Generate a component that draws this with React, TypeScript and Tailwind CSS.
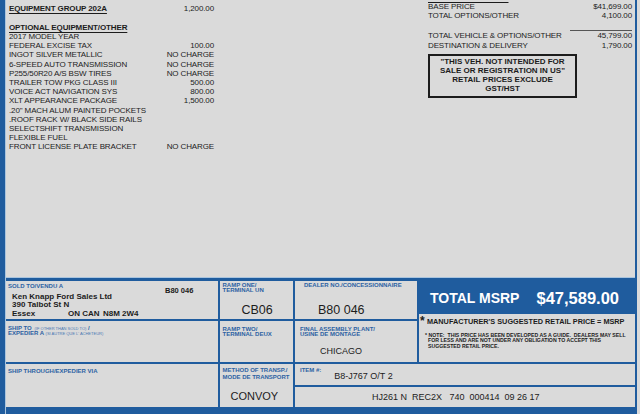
const OPTIONS: [string, string][] = [
  ['2017 MODEL YEAR', ''],
  ['FEDERAL EXCISE TAX', '100.00'],
  ['INGOT SILVER METALLIC', 'NO CHARGE'],
  ['6-SPEED AUTO TRANSMISSION', 'NO CHARGE'],
  ['P255/50R20 A/S BSW TIRES', 'NO CHARGE'],
  ['TRAILER TOW PKG CLASS III', '500.00'],
  ['VOICE ACT NAVIGATION SYS', '800.00'],
  ['XLT APPEARANCE PACKAGE', '1,500.00'],
  ['.20" MACH ALUM PAINTED POCKETS', ''],
  ['.ROOF RACK W/ BLACK SIDE RAILS', ''],
  ['SELECTSHIFT TRANSMISSION', ''],
  ['FLEXIBLE FUEL', ''],
  ['FRONT LICENSE PLATE BRACKET', 'NO CHARGE'],
];

function Label({ children, className = '' }: { children: React.ReactNode; className?: string }) {
  return (
    <div
      className={`font-['Liberation_Sans_Narrow','Liberation_Sans',Arial,sans-serif] font-bold uppercase text-[#2d62a3] text-[6px] leading-[5px] whitespace-nowrap ${className}`}
    >
      {children}
    </div>
  );
}

export default function App() {
  return (
    <div className="w-[640px] h-[414px] overflow-hidden flex bg-[#dadada] text-[#1c1c1c] font-['Liberation_Sans',Arial,sans-serif]">
      <div className="w-[5px] shrink-0 bg-[#1f5c9e]" />
      <div className="w-[1px] shrink-0 bg-[#a9c4de]" />

      <div className="w-[629px] shrink-0 flex flex-col">
        {/* Top: equipment + price information */}
        <div className="h-[278px] shrink-0 border-b border-[#a9c4de] flex pl-[3px] overflow-hidden">
          <div className="w-[205px] shrink-0 pt-[4.4px] text-[8px] leading-[9.2px] tracking-[-0.12px] whitespace-nowrap">
            <div className="flex justify-between">
              <span className="font-bold underline underline-offset-[1.5px]">EQUIPMENT GROUP 202A</span>
              <span>1,200.00</span>
            </div>
            <div className="h-[9.2px]" />
            <div className="font-bold underline underline-offset-[1.5px]">OPTIONAL EQUIPMENT/OTHER</div>
            {OPTIONS.map(([name, value]) => (
              <div key={name} className="flex justify-between">
                <span>{name}</span>
                <span>{value}</span>
              </div>
            ))}
          </div>

          <div className="w-[214px] shrink-0" />

          <div className="w-[204px] shrink-0 -mt-[7.5px] text-[8px] leading-[9.2px] tracking-[-0.12px] whitespace-nowrap">
            <div className="font-bold underline underline-offset-[1.5px]">PRICE INFORMATION</div>
            <div className="flex justify-between">
              <span>BASE PRICE</span>
              <span>$41,699.00</span>
            </div>
            <div className="flex justify-between">
              <span>TOTAL OPTIONS/OTHER</span>
              <span>4,100.00</span>
            </div>
            <div className="h-[11.2px] flex justify-end items-end">
              <div className="w-[62px] h-[1px] bg-[#555]" />
            </div>
            <div className="flex justify-between">
              <span>TOTAL VEHICLE &amp; OPTIONS/OTHER</span>
              <span>45,799.00</span>
            </div>
            <div className="flex justify-between">
              <span>DESTINATION &amp; DELIVERY</span>
              <span>1,790.00</span>
            </div>
            <div className="mt-[4px] w-[149px] border-2 border-[#1c1c1c] pt-[2.5px] pb-[2px] text-center font-bold leading-[8.9px] tracking-normal">
              <div>"THIS VEH. NOT INTENDED FOR</div>
              <div>SALE OR REGISTRATION IN US"</div>
              <div>RETAIL PRICES EXCLUDE</div>
              <div>GST/HST</div>
            </div>
          </div>
        </div>

        {/* Bottom: shipping / dealer / MSRP grid */}
        <div className="flex-1 bg-[#1f5c9e] pt-[3px] pb-[7px] grid grid-cols-[212px_73px_122px_216px] grid-rows-[38px_41px_43px] gap-[2px]">
          {/* Row 1 */}
          <div className="bg-[#dadada] flex">
            <div className="flex-1 pl-[2px] pt-[2px]">
              <Label className="leading-[6px]">SOLD TO/VENDU A</Label>
              <div className="mt-[3.5px] pl-[4px] text-[8px] leading-[8.5px] font-bold whitespace-nowrap">
                <div>Ken Knapp Ford Sales Ltd</div>
                <div>390 Talbot St N</div>
                <div className="flex">
                  <span className="w-[56px]">Essex</span>
                  <span className="w-[35px]">ON CAN</span>
                  <span>N8M 2W4</span>
                </div>
              </div>
            </div>
            <div className="w-[53px] pt-[5.7px] text-[7.5px] leading-[8px] font-bold">B80 046</div>
          </div>

          <div className="bg-[#dadada] pl-[2.5px] pt-[1.5px]">
            <Label>RAMP ONE/</Label>
            <Label>TERMINAL UN</Label>
            <div className="mt-[10.5px] pl-[19px] text-[12.5px] leading-[14px]">CB06</div>
          </div>

          <div className="bg-[#dadada] pl-[9px] pt-[1.5px]">
            <Label>DEALER NO./CONCESSIONNAIRE</Label>
            <div className="mt-[15px] pl-[14px] text-[12.5px] leading-[14px]">B80 046</div>
          </div>

          <div className="row-span-2 flex flex-col">
            <div className="h-[33px] shrink-0 flex items-center pl-[11px] text-white font-bold whitespace-nowrap">
              <span className="text-[14px] leading-[16px]">TOTAL MSRP</span>
              <span className="ml-[17px] text-[16.5px] leading-[16px]">$47,589.00</span>
            </div>
            <div className="flex-1 bg-[#dadada] pt-[3px] pl-[1px] whitespace-nowrap font-['Liberation_Sans_Narrow','Liberation_Sans',Arial,sans-serif] font-bold">
              <div className="flex items-center text-[7.3px] leading-[9px]">
                <span className="text-[12px] leading-[9px] w-[7px]">*</span>
                <span>MANUFACTURER'S SUGGESTED RETAIL PRICE = MSRP</span>
              </div>
              <div className="mt-[7px] text-[5.2px] leading-[5.3px]">
                <div className="pl-[5px]">* NOTE:&nbsp; THIS PRICE HAS BEEN DEVELOPED AS A GUIDE.&nbsp; DEALERS MAY SELL</div>
                <div className="pl-[8px]">FOR LESS AND ARE NOT UNDER ANY OBLIGATION TO ACCEPT THIS</div>
                <div className="pl-[8px]">SUGGESTED RETAIL PRICE.</div>
              </div>
            </div>
          </div>

          {/* Row 2 */}
          <div className="bg-[#dadada] pl-[2px] pt-[5.3px]">
            <Label className="leading-[5.3px]">
              SHIP TO <span className="text-[4px] font-normal text-[#4a78b3]">&nbsp;(IF OTHER THAN SOLD TO)</span> /
            </Label>
            <Label className="leading-[5.3px]">
              EXPEDIER A <span className="text-[4px] font-normal text-[#4a78b3]">(SI AUTRE QUE L' ACHETEUR)</span>
            </Label>
          </div>

          <div className="bg-[#dadada] pl-[2.5px] pt-[5.5px]">
            <Label>RAMP TWO/</Label>
            <Label>TERMINAL DEUX</Label>
          </div>

          <div className="bg-[#dadada] pl-[5px] pt-[5.5px]">
            <Label>FINAL ASSEMBLY PLANT/</Label>
            <Label>USINE DE MONTAGE</Label>
            <div className="mt-[9.5px] pl-[20px] text-[9px] leading-[10px]">CHICAGO</div>
          </div>

          {/* Row 3 */}
          <div className="bg-[#dadada] pl-[2px] pt-[4px]">
            <Label className="leading-[6px]">SHIP THROUGH/EXPEDIER VIA</Label>
          </div>

          <div className="bg-[#dadada] pl-[2.5px] pt-[3px]">
            <Label className="leading-[6.5px]">METHOD OF TRANSP./</Label>
            <Label className="leading-[6.5px]">MODE DE TRANSPORT</Label>
            <div className="mt-[10px] pl-[8px] text-[11px] leading-[12px]">CONVOY</div>
          </div>

          <div className="col-span-2 flex flex-col gap-[2px]">
            <div className="h-[21px] shrink-0 bg-[#dadada] flex items-start pl-[5px]">
              <Label className="pt-[3.5px] text-[4.5px]">ITEM #:</Label>
              <div className="pt-[7.3px] pl-[13px] text-[9px] leading-[10px]">B8-J767 O/T 2</div>
            </div>
            <div className="flex-1 bg-[#dadada] flex items-center pl-[77px] text-[9px] leading-[10px] whitespace-pre">
              HJ261 N  REC2X   740  000414  09 26 17
            </div>
          </div>
        </div>
      </div>

      <div className="w-[2px] shrink-0 bg-[#1f5c9e]" />
      <div className="w-[3px] shrink-0 bg-[#dadada]" />
    </div>
  );
}
